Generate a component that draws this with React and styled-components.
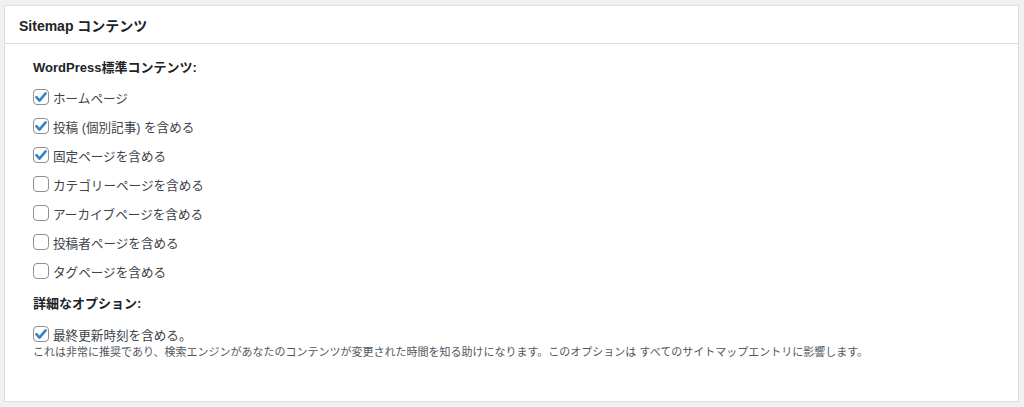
import React from "react";
import styled, { createGlobalStyle } from "styled-components";

const GlobalStyle = createGlobalStyle`
  body {
    margin: 0;
    background: #f0f0f1;
    font-family: "Liberation Sans", "Noto Sans CJK JP", sans-serif;
    color: #3c434a;
  }
`;

const Panel = styled.section`
  margin: 5px 5px 5px 4px;
  height: 397px;
  box-sizing: border-box;
  background: #fff;
  border: 1px solid #dcdcde;
  display: flex;
  flex-direction: column;
`;

const Header = styled.h2`
  margin: 0;
  height: 38px;
  box-sizing: border-box;
  border-bottom: 1px solid #dcdcde;
  padding: 0 14px;
  display: flex;
  align-items: center;
  font-size: 14px;
  font-weight: 600;
  color: #1d2327;
`;

const Body = styled.div`
  padding: 14px 28px 0;
`;

const GroupTitle = styled.h3`
  margin: ${(p) => (p.$first ? "0 0 8px" : "12px 0 9px")};
  height: 20px;
  line-height: 20px;
  font-size: 13px;
  font-weight: 600;
  color: #1d2327;
`;

const Row = styled.label`
  display: flex;
  align-items: center;
  gap: 4px;
  height: 22px;
  margin-bottom: ${(p) => (p.$last ? "0" : "7px")};
  font-size: 12.6px;
  color: #3c434a;
  cursor: pointer;
`;

const Box = styled.span`
  width: 16px;
  height: 16px;
  box-sizing: border-box;
  border: 1px solid #8c8f94;
  border-radius: 4px;
  background: #fff;
  display: flex;
  align-items: center;
  justify-content: center;
  flex: none;
`;

const Description = styled.p`
  margin: 0;
  line-height: 14px;
  font-size: 11px;
  color: #50575e;
`;

const Check = ({ checked }) => (
  <Box>
    {checked && (
      <svg width="14" height="14" viewBox="0 0 14 14">
        <path
          d="M2.4 7.2 L5.5 10.6 L11.6 3.4"
          fill="none"
          stroke="#3582c4"
          strokeWidth="2.6"
          strokeLinecap="round"
          strokeLinejoin="round"
        />
      </svg>
    )}
  </Box>
);

const contents = [
  { label: "ホームページ", checked: true },
  { label: "投稿 (個別記事) を含める", checked: true },
  { label: "固定ページを含める", checked: true },
  { label: "カテゴリーページを含める", checked: false },
  { label: "アーカイブページを含める", checked: false },
  { label: "投稿者ページを含める", checked: false },
  { label: "タグページを含める", checked: false },
];

export default function App() {
  return (
    <>
      <GlobalStyle />
      <Panel>
        <Header>Sitemap コンテンツ</Header>
        <Body>
          <GroupTitle $first>WordPress標準コンテンツ:</GroupTitle>
          {contents.map((c) => (
            <Row key={c.label}>
              <Check checked={c.checked} />
              {c.label}
            </Row>
          ))}
          <GroupTitle>詳細なオプション:</GroupTitle>
          <Row $last>
            <Check checked />
            最終更新時刻を含める。
          </Row>
          <Description>
            これは非常に推奨であり、検索エンジンがあなたのコンテンツが変更された時間を知る助けになります。このオプションは
            すべてのサイトマップエントリに影響します。
          </Description>
        </Body>
      </Panel>
    </>
  );
}
